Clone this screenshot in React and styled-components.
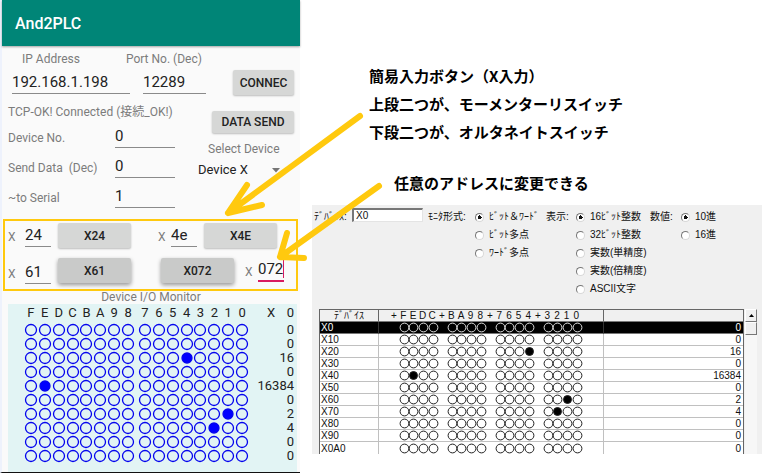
import React from "react";
import styled, { createGlobalStyle, css } from "styled-components";

const JP = '"Noto Sans CJK JP", sans-serif';
const PANEL_FONT = '"Liberation Sans", "Noto Sans CJK JP", sans-serif';

const GlobalStyle = createGlobalStyle`
  *, *::before, *::after { box-sizing: border-box; }
  body { margin: 0; background: #fff; }
  button, input, select { margin: 0; padding: 0; font: inherit; color: inherit; }
`;

const Page = styled.main`
  position: relative;
  display: grid;
  grid-template-columns: 300fr 466fr;
  align-items: start;
`;

/* ---------- phone app ---------- */

const Phone = styled.section`
  border-left: 2px solid #eef2fc;
  border-bottom: 1px solid #111;
  background: #fafafa;
  color: #222;
  font: 12px/14px Roboto, "Noto Sans CJK JP", sans-serif;
`;

const AppBar = styled.header`
  display: flex;
  align-items: center;
  height: 46px;
  padding: 2px 0 0 13px;
  background: #008577;
  box-shadow: 0 1px 2px rgba(0, 0, 0, 0.35);
`;

const AppTitle = styled.h1`
  margin: 0;
  color: #fff;
  font-size: 16px;
  font-weight: 500;
  line-height: 20px;
`;

const Caption = styled.label`
  color: #7c7c7c;
  white-space: pre;
`;

const CaptionRow = styled.div`
  display: flex;
  gap: 46px;
  padding: 6px 0 4px 20px;
`;

const ConnectRow = styled.div`
  display: flex;
  gap: 13px;
  padding: 0 6px 0 10px;
`;

const LineInput = styled.input`
  width: ${(p) => p.$w}px;
  height: 24px;
  border: 0;
  border-bottom: ${(p) => (p.$active ? "2px solid #d81b60" : "1px solid #8a8a8a")};
  outline: 0;
  background: transparent;
  font-size: 15px;
`;

const AppButton = styled.button`
  width: ${(p) => p.$w}px;
  height: ${(p) => p.$h || 25}px;
  border: 0;
  border-radius: 2px;
  background: ${(p) => (p.$raised ? "#c9cac9" : "#d6d7d6")};
  box-shadow: ${(p) =>
    p.$raised ? "0 2px 4px rgba(0,0,0,.4)" : "0 1px 2px rgba(0,0,0,.25)"};
  font-size: 12px;
  font-weight: 500;
  ${(p) => p.$end && css`margin-left: auto;`}
`;

const Settings = styled.div`
  display: flex;
  justify-content: space-between;
  padding: 10px 6px 0 6px;
`;

const Fields = styled.div`
  display: grid;
  gap: 4px;
  padding-top: 4px;
`;

const FieldRow = styled.div`
  display: grid;
  grid-template-columns: 107px 60px;
  align-items: center;
  height: 26px;
  ${Caption} { padding-top: 3px; }
`;

const SendColumn = styled.div`
  display: flex;
  flex-direction: column;
  width: 96px;
  padding-top: 6px;
`;

const SelectCaption = styled(Caption)`
  padding: 9px 0 4px 10px;
`;

const SelectBox = styled.div`
  display: grid;
  grid-template-columns: 1fr 22px;
  align-items: center;
  & > * { grid-row: 1; }
`;

const DeviceSelect = styled.select`
  grid-column: 1 / 3;
  height: 20px;
  border: 0;
  background: transparent;
  appearance: none;
  font-size: 13px;
`;

const SelectArrow = styled.svg`
  grid-column: 2;
  width: 8px;
  height: 5px;
  pointer-events: none;
`;

const Switches = styled.div`
  display: grid;
  gap: 9px;
  margin: 10px 2px 0 1px;
  padding: 2px 3px 5px;
  border: 2px solid #ffc90e;
`;

const SwitchRow = styled.div`
  display: flex;
  justify-content: flex-start;
  gap: ${(p) => p.$gap}px;
  height: 26px;
`;

const SwitchGroup = styled.div`
  display: flex;
  gap: ${(p) => p.$gap || 7}px;
`;

const Address = styled.div`
  position: relative;
  display: grid;
  grid-template-columns: ${(p) => p.$label}px 26px;
  align-items: center;
  align-self: ${(p) => (p.$low ? "flex-end" : "flex-start")};
  ${Caption} { padding-top: 4px; }
`;

const Caret = styled.span`
  position: absolute;
  right: 0;
  top: 2px;
  width: 1px;
  height: 18px;
  background: #d81b60;
`;

const MonitorTitle = styled.h2`
  margin: 0;
  color: #7c7c7c;
  font-size: 12px;
  font-weight: 400;
  line-height: 13px;
  text-align: center;
`;

const Monitor = styled.div`
  margin: 0 3px 0 6px;
  padding: 1px 3px 9px 16px;
  background: #e2f4f4;
`;

const MonitorTable = styled.table`
  width: 100%;
  border-collapse: collapse;
  table-layout: fixed;
  color: #222;
  font-size: 13px;
  line-height: 14px;
  th, td { height: 14px; padding: 0; font-weight: 400; text-align: right; }
  thead th { height: 18px; padding-bottom: 2px; }
  th:first-child { width: 225px; }
`;

const MonitorStrip = styled.div`
  display: grid;
  grid-template-columns: repeat(8, 1fr) 3px repeat(8, 1fr);
  justify-items: center;
  align-items: center;
`;

const ValueHead = styled.div`
  display: flex;
  justify-content: space-between;
  padding-left: 18px;
`;

const Lamp = styled.svg`
  display: block;
  width: ${(p) => p.$size}px;
  height: ${(p) => p.$size}px;
  overflow: visible;
`;

/* ---------- notes and monitor window ---------- */

const Side = styled.section`
  padding: 62px 4px 0 12px;
`;

const Note = styled.p`
  margin: 0 0 0 57px;
  color: #000;
  font: 700 15px/28px ${JP};
  white-space: nowrap;
`;

const AddressNote = styled(Note)`
  margin: 23px 0 8px 82px;
`;

const Window = styled.div`
  padding: 3px 5px 0 2px;
  background: #f0f0f0;
  color: #111;
  font: 10px/18px ${PANEL_FONT};
`;

const OptionsBar = styled.form`
  display: flex;
  align-items: flex-start;
  white-space: nowrap;
`;

const DeviceField = styled.div`
  display: grid;
  grid-template-columns: 38px 71px;
  align-items: start;
  margin-right: 5px;
`;

const DeviceInput = styled.input`
  height: 14px;
  padding-left: 2px;
  border: 1px solid #e4e4e4;
  border-top: 2px solid #777;
  border-left: 2px solid #777;
  outline: 0;
  background: #fff;
  line-height: 11px;
`;

const OptionSet = styled.div`
  display: grid;
  grid-template-columns: ${(p) => p.$label}px auto;
  width: ${(p) => p.$w}px;
`;

const Option = styled.label`
  display: flex;
  align-items: center;
  gap: 5px;
  height: 18px;
`;

const Radio = styled.input`
  appearance: none;
  flex: none;
  width: 9px;
  height: 9px;
  border: 1px solid #d8d8d8;
  border-top-color: #777;
  border-left-color: #777;
  border-radius: 50%;
  background: #fff;
  &:checked { background: radial-gradient(circle, #111 0 2px, #fff 2px); }
`;

const GridArea = styled.div`
  display: flex;
  margin: 11px 0 0 5px;
`;

const DeviceTable = styled.table`
  flex: 1;
  border-collapse: separate;
  border-spacing: 0;
  table-layout: fixed;
  border-left: 1px solid #666;
  border-right: 1px solid #666;
  background: #fff;
  line-height: 11px;
  th, td {
    height: 12px;
    padding: 0 2px 0 1px;
    border-bottom: 1px solid #c0c0c0;
    border-right: 1px solid #c0c0c0;
    font-weight: 400;
    text-align: left;
  }
  thead th {
    height: 13px;
    padding: 0;
    border-top: 1px solid #666;
    border-bottom: 1px solid #777;
    border-right-color: #666;
    background: #f0f0f0;
    text-align: center;
  }
  th:last-child, td:last-child { border-right: 0; text-align: right; }
  tbody tr:last-child > * { border-bottom: 0; }
  thead th:first-child { width: 59px; }
  thead th:nth-child(2) { width: 225px; }
`;

const DeviceRow = styled.tr`
  ${(p) =>
    p.$selected &&
    css`
      background: #000;
      color: #fff;
      && > * { border-right-color: #333; border-bottom-color: #777; }
    `}
`;

const DeviceStrip = styled.div`
  display: grid;
  grid-template-columns: repeat(20, 1fr);
  width: 192px;
  margin-left: 10px;
  justify-items: center;
  align-items: center;
`;

const ScrollTrack = styled.div`
  width: 12px;
  margin-left: 1px;
  background: #f7f7f7;
`;

const ScrollButton = styled.button`
  display: grid;
  place-items: center;
  width: 12px;
  height: 13px;
  border: 1px solid #fff;
  border-right-color: #777;
  border-bottom-color: #777;
  background: #f0f0f0;
`;

const Arrows = styled.svg`
  position: absolute;
  top: 0;
  left: 0;
  width: 100%;
  pointer-events: none;
`;

const HEX = "FEDCBA9876543210".split("");
const PHONE_VALUES = [0, 0, 16, 0, 16384, 0, 2, 4, 0, 0];
const DEVICES = [
  ["X0", 0], ["X10", 0], ["X20", 16], ["X30", 0], ["X40", 16384], ["X50", 0],
  ["X60", 2], ["X70", 4], ["X80", 0], ["X90", 0], ["X0A0", 0],
];
const isOn = (value, index) => ((value >> (15 - index)) & 1) === 1;

function PhoneBits({ value }) {
  return (
    <MonitorStrip>
      {HEX.map((h, i) => (
        <React.Fragment key={h}>
          {i === 8 && <span />}
          <Lamp $size={12} viewBox="0 0 12 12">
            <circle cx="6" cy="6" r={isOn(value, i) ? 5 : 5.5} stroke="#0505ee" strokeWidth="1.3"
              fill={isOn(value, i) ? "#00f" : "none"} />
          </Lamp>
        </React.Fragment>
      ))}
    </MonitorStrip>
  );
}

function DeviceBits({ value, selected }) {
  return (
    <DeviceStrip>
      {HEX.map((h, i) => (
        <React.Fragment key={h}>
          {i % 4 === 0 && <span />}
          <Lamp $size={9} viewBox="0 0 9 9">
            <circle cx="4.5" cy="4.5" r={isOn(value, i) ? 4 : 4.4} strokeWidth="1"
              stroke={selected ? "#ddd" : "#222"} fill={isOn(value, i) ? "#000" : "none"} />
          </Lamp>
        </React.Fragment>
      ))}
    </DeviceStrip>
  );
}

function AddressField({ id, value, label = 17, active, low }) {
  return (
    <Address $label={label} $low={low}>
      <Caption htmlFor={id}>X</Caption>
      <LineInput id={id} $w={26} $active={active} defaultValue={value} />
      {active && <Caret />}
    </Address>
  );
}

function Options({ name, title, items, label, width }) {
  return (
    <OptionSet role="radiogroup" aria-labelledby={name} $label={label} $w={width}>
      <span id={name}>{title}</span>
      <div>
        {items.map((text, i) => (
          <Option key={text}>
            <Radio type="radio" name={name} defaultChecked={i === 0} />
            {text}
          </Option>
        ))}
      </div>
    </OptionSet>
  );
}

function PhoneApp() {
  return (
    <Phone>
      <AppBar><AppTitle>And2PLC</AppTitle></AppBar>
      <CaptionRow>
        <Caption htmlFor="ip">IP Address</Caption>
        <Caption htmlFor="port">Port No. (Dec)</Caption>
      </CaptionRow>
      <ConnectRow>
        <LineInput id="ip" $w={118} defaultValue="192.168.1.198" />
        <LineInput id="port" $w={63} defaultValue="12289" />
        <AppButton $w={61} $end>CONNEC</AppButton>
      </ConnectRow>
      <Settings>
        <div>
          <Caption as="div">TCP-OK! Connected (接続_OK!)</Caption>
          <Fields>
            <FieldRow>
              <Caption htmlFor="no">Device No.</Caption>
              <LineInput id="no" $w={60} defaultValue="0" />
            </FieldRow>
            <FieldRow>
              <Caption htmlFor="data">{"Send Data  (Dec)"}</Caption>
              <LineInput id="data" $w={60} defaultValue="0" />
            </FieldRow>
            <FieldRow>
              <Caption htmlFor="serial">~to Serial</Caption>
              <LineInput id="serial" $w={60} defaultValue="1" />
            </FieldRow>
          </Fields>
        </div>
        <SendColumn>
          <AppButton $w={82} $h={22} $end>DATA SEND</AppButton>
          <SelectCaption htmlFor="device">Select Device</SelectCaption>
          <SelectBox>
            <DeviceSelect id="device"><option>Device X</option></DeviceSelect>
            <SelectArrow viewBox="0 0 8 5"><path d="M0 0h8L4 4.5z" fill="#757575" /></SelectArrow>
          </SelectBox>
        </SendColumn>
      </Settings>
      <Switches>
        <SwitchRow $gap={27}>
          <SwitchGroup>
            <AddressField id="x24" value="24" />
            <AppButton $w={73}>X24</AppButton>
          </SwitchGroup>
          <SwitchGroup>
            <AddressField id="x4e" value="4e" label={13} />
            <AppButton $w={73}>X4E</AppButton>
          </SwitchGroup>
        </SwitchRow>
        <SwitchRow $gap={30}>
          <SwitchGroup>
            <AddressField id="x61" value="61" low />
            <AppButton $w={73} $raised>X61</AppButton>
          </SwitchGroup>
          <SwitchGroup $gap={11}>
            <AppButton $w={73} $raised>X072</AppButton>
            <AddressField id="x072" value="072" label={13} active />
          </SwitchGroup>
        </SwitchRow>
      </Switches>
      <MonitorTitle>Device I/O Monitor</MonitorTitle>
      <Monitor>
        <MonitorTable>
          <thead>
            <tr>
              <th>
                <MonitorStrip>
                  {HEX.map((h, i) => (
                    <React.Fragment key={h}>
                      {i === 8 && <span />}
                      <span>{h}</span>
                    </React.Fragment>
                  ))}
                </MonitorStrip>
              </th>
              <th><ValueHead><span>X</span><span>0</span></ValueHead></th>
            </tr>
          </thead>
          <tbody>
            {PHONE_VALUES.map((v, i) => (
              <tr key={i}>
                <td><PhoneBits value={v} /></td>
                <td>{v}</td>
              </tr>
            ))}
          </tbody>
        </MonitorTable>
      </Monitor>
    </Phone>
  );
}

function MonitorWindow() {
  return (
    <Window>
      <OptionsBar>
        <DeviceField>
          <label htmlFor="dev">ﾃﾞﾊﾞｲｽ:</label>
          <DeviceInput id="dev" defaultValue="X0" />
        </DeviceField>
        <Options name="format" title="ﾓﾆﾀ形式:" label={47} width={118}
          items={["ﾋﾞｯﾄ＆ﾜｰﾄﾞ", "ﾋﾞｯﾄ多点", "ﾜｰﾄﾞ多点"]} />
        <Options name="display" title="表示:" label={30} width={104}
          items={["16ﾋﾞｯﾄ整数", "32ﾋﾞｯﾄ整数", "実数(単精度)", "実数(倍精度)", "ASCII文字"]} />
        <Options name="radix" title="数値:" label={31} width={70} items={["10進", "16進"]} />
      </OptionsBar>
      <GridArea>
        <DeviceTable>
          <thead>
            <tr>
              <th>ﾃﾞﾊﾞｲｽ</th>
              <th>
                <DeviceStrip>
                  {"+FEDC+BA98+7654+3210".split("").map((c, i) => <span key={i}>{c}</span>)}
                </DeviceStrip>
              </th>
              <th />
            </tr>
          </thead>
          <tbody>
            {DEVICES.map(([name, value], i) => (
              <DeviceRow key={name} $selected={i === 0}>
                <td>{name}</td>
                <td><DeviceBits value={value} selected={i === 0} /></td>
                <td>{value}</td>
              </DeviceRow>
            ))}
          </tbody>
        </DeviceTable>
        <ScrollTrack>
          <ScrollButton type="button" aria-label="Scroll up">
            <svg width="5" height="3" viewBox="0 0 5 3"><path d="M0 3L2.5 0L5 3z" /></svg>
          </ScrollButton>
          <ScrollButton type="button" aria-label="Scroll thumb" />
        </ScrollTrack>
      </GridArea>
    </Window>
  );
}

export default function App() {
  return (
    <Page>
      <GlobalStyle />
      <PhoneApp />
      <Side>
        <Note>簡易入力ボタン（X入力）</Note>
        <Note>上段二つが、モーメンターリスイッチ</Note>
        <Note>下段二つが、オルタネイトスイッチ</Note>
        <AddressNote>任意のアドレスに変更できる</AddressNote>
        <MonitorWindow />
      </Side>
      <Arrows viewBox="0 0 766 473" fill="none" stroke="#ffc90e" strokeWidth="6"
        strokeLinecap="round" strokeLinejoin="round" aria-hidden="true">
        <path d="M360 116L228 213M247 185L228 213L262 205" />
        <path d="M379 186L280 257M287 233L280 257L304 258" />
      </Arrows>
    </Page>
  );
}
